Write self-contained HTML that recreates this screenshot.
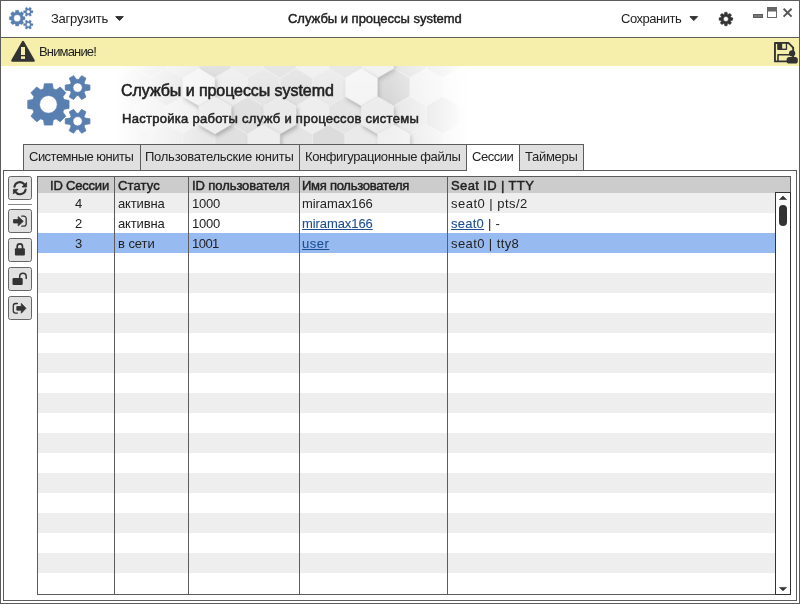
<!DOCTYPE html>
<html lang="ru">
<head>
<meta charset="utf-8">
<title>Службы и процессы systemd</title>
<style>
*{box-sizing:border-box;margin:0;padding:0}
html,body{width:800px;height:604px;overflow:hidden;background:#fff}
body{font-family:"Liberation Sans",sans-serif;font-size:13px;color:#222;position:relative}
.abs{position:absolute}
svg{position:absolute;overflow:visible}
.t{position:absolute;white-space:nowrap;line-height:16px;height:16px;color:#222;will-change:transform}
.t.m{-webkit-text-stroke:0.45px #222}
.t.m2{-webkit-text-stroke:0.5px #222}
.t.h1{font-size:16px;line-height:20px;height:20px;-webkit-text-stroke:0.55px #222}
#win{position:absolute;left:0;top:0;width:800px;height:604px;border:1px solid #5c5c5c}
#tbsep{left:1px;top:37px;width:798px;height:1px;background:#5c5c5c}
#warn{left:1px;top:38px;width:798px;height:28px;background:#f5efab}
#hex{left:100px;top:66px;width:400px;height:104px}
.tab{position:absolute;top:144px;height:27px;border:1px solid #5c5c5c;background:#e0e0e0}
.tab.act{background:#fff;border-bottom:none;z-index:3}
#pane{left:3px;top:170px;width:794px;height:431px;border:1px solid #5c5c5c;background:#fff}
.btn{position:absolute;left:8px;width:24px;height:24px;border:1px solid #666;border-radius:2.5px;background:#e1e1e1}
#table{left:37px;top:176px;width:754px;height:419px;border:1px solid #5c5c5c;background:#fff}
.row{position:absolute;left:38px;width:737px;height:20px}
.vs{position:absolute;top:177px;width:1px;height:417px;background:#5c5c5c}
#sb{left:775px;top:192px;width:16px;height:403px;border:1px solid #333;background:#fff}
#thumb{left:779px;top:205px;width:8px;height:21px;border-radius:4px;background:#333}
a{color:#1d4f91;text-decoration:underline;-webkit-text-stroke:0.1px #1d4f91}
</style>
</head>
<body>
<div id="win"></div>
<!-- toolbar -->
<div class="t" id="t_load" style="left:51.2px;top:11px;letter-spacing:-0.257px">Загрузить</div>
<div class="t m" id="t_title" style="left:288.2px;top:11px;letter-spacing:-0.014px">Службы и процессы systemd</div>
<div class="t" id="t_save" style="left:621.2px;top:11px;letter-spacing:-0.476px">Сохранить</div>
<div class="abs" id="tbsep"></div>
<div class="abs" id="warn"></div>
<div class="t" id="t_warn" style="left:38.6px;top:44px;letter-spacing:-0.845px">Внимание!</div>
<!-- header banner -->
<svg style="left:0;top:66px" width="800" height="78" viewBox="0 66 800 78">
<defs>
<filter id="hb" x="-30%" y="-30%" width="160%" height="160%"><feGaussianBlur stdDeviation="2.2"/></filter>
<linearGradient id="hm" x1="0" y1="0" x2="1" y2="0" gradientUnits="objectBoundingBox">
<stop offset="0" stop-color="#000"/><stop offset="0.04" stop-color="#000"/><stop offset="0.27" stop-color="#fff"/><stop offset="0.74" stop-color="#fff"/><stop offset="0.95" stop-color="#000"/><stop offset="1" stop-color="#000"/>
</linearGradient>
<linearGradient id="hv" x1="0" y1="0" x2="0" y2="1"><stop offset="0" stop-color="#fff" stop-opacity="0.25"/><stop offset="0.5" stop-color="#fff" stop-opacity="0"/></linearGradient>
<mask id="hk" maskUnits="userSpaceOnUse" x="100" y="66" width="390" height="78"><rect x="100" y="66" width="390" height="78" fill="url(#hm)"/></mask>
</defs>
<g mask="url(#hk)">
<rect x="100" y="66" width="390" height="78" fill="#e4e4e4"/>
<path d="M117.5 40.5 L133.6 49.8 L133.6 68.4 L117.5 77.7 L101.4 68.4 L101.4 49.8Z" fill="#e6e6e6" stroke="#f0f0f0" stroke-width="0.5"/>
<path d="M150.0 40.5 L166.1 49.8 L166.1 68.4 L150.0 77.7 L133.9 68.4 L133.9 49.8Z" fill="#e0e0e0" stroke="#f0f0f0" stroke-width="0.5"/>
<path d="M182.5 40.5 L198.6 49.8 L198.6 68.4 L182.5 77.7 L166.4 68.4 L166.4 49.8Z" fill="#e8e8e8" stroke="#f0f0f0" stroke-width="0.5"/>
<path d="M215.0 40.5 L231.1 49.8 L231.1 68.4 L215.0 77.7 L198.9 68.4 L198.9 49.8Z" fill="#d8d8d8" stroke="#f0f0f0" stroke-width="0.5"/>
<path d="M247.5 40.5 L263.6 49.8 L263.6 68.4 L247.5 77.7 L231.4 68.4 L231.4 49.8Z" fill="#e8e8e8" stroke="#f0f0f0" stroke-width="0.5"/>
<path d="M280.0 40.5 L296.1 49.8 L296.1 68.4 L280.0 77.7 L263.9 68.4 L263.9 49.8Z" fill="#dedede" stroke="#f0f0f0" stroke-width="0.5"/>
<path d="M312.5 40.5 L328.6 49.8 L328.6 68.4 L312.5 77.7 L296.4 68.4 L296.4 49.8Z" fill="#ededed" stroke="#f0f0f0" stroke-width="0.5"/>
<path d="M345.0 40.5 L361.1 49.8 L361.1 68.4 L345.0 77.7 L328.9 68.4 L328.9 49.8Z" fill="#e2e2e2" stroke="#f0f0f0" stroke-width="0.5"/>
<path d="M410.0 40.5 L426.1 49.8 L426.1 68.4 L410.0 77.7 L393.9 68.4 L393.9 49.8Z" fill="#dcdcdc" stroke="#f0f0f0" stroke-width="0.5"/>
<path d="M442.5 40.5 L458.6 49.8 L458.6 68.4 L442.5 77.7 L426.4 68.4 L426.4 49.8Z" fill="#dddddd" stroke="#f0f0f0" stroke-width="0.5"/>
<path d="M475.0 40.5 L491.1 49.8 L491.1 68.4 L475.0 77.7 L458.9 68.4 L458.9 49.8Z" fill="#ececec" stroke="#f0f0f0" stroke-width="0.5"/>
<path d="M101.2 68.6 L117.3 77.9 L117.3 96.5 L101.2 105.8 L85.2 96.5 L85.2 77.9Z" fill="#e2e2e2" stroke="#f0f0f0" stroke-width="0.5"/>
<path d="M133.8 68.6 L149.8 77.9 L149.8 96.5 L133.8 105.8 L117.7 96.5 L117.7 77.9Z" fill="#dddddd" stroke="#f0f0f0" stroke-width="0.5"/>
<path d="M166.2 68.6 L182.3 77.9 L182.3 96.5 L166.2 105.8 L150.2 96.5 L150.2 77.9Z" fill="#e2e2e2" stroke="#f0f0f0" stroke-width="0.5"/>
<path d="M231.2 68.6 L247.3 77.9 L247.3 96.5 L231.2 105.8 L215.2 96.5 L215.2 77.9Z" fill="#ececec" stroke="#f0f0f0" stroke-width="0.5"/>
<path d="M263.8 68.6 L279.8 77.9 L279.8 96.5 L263.8 105.8 L247.7 96.5 L247.7 77.9Z" fill="#e4e4e4" stroke="#f0f0f0" stroke-width="0.5"/>
<path d="M296.2 68.6 L312.3 77.9 L312.3 96.5 L296.2 105.8 L280.2 96.5 L280.2 77.9Z" fill="#e0e0e0" stroke="#f0f0f0" stroke-width="0.5"/>
<path d="M328.8 68.6 L344.8 77.9 L344.8 96.5 L328.8 105.8 L312.7 96.5 L312.7 77.9Z" fill="#e8e8e8" stroke="#f0f0f0" stroke-width="0.5"/>
<path d="M393.8 68.6 L409.8 77.9 L409.8 96.5 L393.8 105.8 L377.7 96.5 L377.7 77.9Z" fill="#d6d6d6" stroke="#f0f0f0" stroke-width="0.5"/>
<path d="M426.2 68.6 L442.3 77.9 L442.3 96.5 L426.2 105.8 L410.2 96.5 L410.2 77.9Z" fill="#eeeeee" stroke="#f0f0f0" stroke-width="0.5"/>
<path d="M458.8 68.6 L474.8 77.9 L474.8 96.5 L458.8 105.8 L442.7 96.5 L442.7 77.9Z" fill="#f4f4f4" stroke="#f0f0f0" stroke-width="0.5"/>
<path d="M491.2 68.6 L507.3 77.9 L507.3 96.5 L491.2 105.8 L475.2 96.5 L475.2 77.9Z" fill="#dfdfdf" stroke="#f0f0f0" stroke-width="0.5"/>
<path d="M117.5 96.7 L133.6 106.0 L133.6 124.6 L117.5 133.9 L101.4 124.6 L101.4 106.0Z" fill="#e3e3e3" stroke="#f0f0f0" stroke-width="0.5"/>
<path d="M150.0 96.7 L166.1 106.0 L166.1 124.6 L150.0 133.9 L133.9 124.6 L133.9 106.0Z" fill="#ececec" stroke="#f0f0f0" stroke-width="0.5"/>
<path d="M182.5 96.7 L198.6 106.0 L198.6 124.6 L182.5 133.9 L166.4 124.6 L166.4 106.0Z" fill="#f0f0f0" stroke="#f0f0f0" stroke-width="0.5"/>
<path d="M247.5 96.7 L263.6 106.0 L263.6 124.6 L247.5 133.9 L231.4 124.6 L231.4 106.0Z" fill="#e0e0e0" stroke="#f0f0f0" stroke-width="0.5"/>
<path d="M312.5 96.7 L328.6 106.0 L328.6 124.6 L312.5 133.9 L296.4 124.6 L296.4 106.0Z" fill="#eeeeee" stroke="#f0f0f0" stroke-width="0.5"/>
<path d="M345.0 96.7 L361.1 106.0 L361.1 124.6 L345.0 133.9 L328.9 124.6 L328.9 106.0Z" fill="#e4e4e4" stroke="#f0f0f0" stroke-width="0.5"/>
<path d="M410.0 96.7 L426.1 106.0 L426.1 124.6 L410.0 133.9 L393.9 124.6 L393.9 106.0Z" fill="#e6e6e6" stroke="#f0f0f0" stroke-width="0.5"/>
<path d="M442.5 96.7 L458.6 106.0 L458.6 124.6 L442.5 133.9 L426.4 124.6 L426.4 106.0Z" fill="#dddddd" stroke="#f0f0f0" stroke-width="0.5"/>
<path d="M475.0 96.7 L491.1 106.0 L491.1 124.6 L475.0 133.9 L458.9 124.6 L458.9 106.0Z" fill="#ededed" stroke="#f0f0f0" stroke-width="0.5"/>
<path d="M101.2 124.8 L117.3 134.1 L117.3 152.7 L101.2 162.0 L85.2 152.7 L85.2 134.1Z" fill="#e0e0e0" stroke="#f0f0f0" stroke-width="0.5"/>
<path d="M133.8 124.8 L149.8 134.1 L149.8 152.7 L133.8 162.0 L117.7 152.7 L117.7 134.1Z" fill="#e5e5e5" stroke="#f0f0f0" stroke-width="0.5"/>
<path d="M166.2 124.8 L182.3 134.1 L182.3 152.7 L166.2 162.0 L150.2 152.7 L150.2 134.1Z" fill="#e9e9e9" stroke="#f0f0f0" stroke-width="0.5"/>
<path d="M198.8 124.8 L214.8 134.1 L214.8 152.7 L198.8 162.0 L182.7 152.7 L182.7 134.1Z" fill="#e8e8e8" stroke="#f0f0f0" stroke-width="0.5"/>
<path d="M231.2 124.8 L247.3 134.1 L247.3 152.7 L231.2 162.0 L215.2 152.7 L215.2 134.1Z" fill="#e0e0e0" stroke="#f0f0f0" stroke-width="0.5"/>
<path d="M296.2 124.8 L312.3 134.1 L312.3 152.7 L296.2 162.0 L280.2 152.7 L280.2 134.1Z" fill="#e4e4e4" stroke="#f0f0f0" stroke-width="0.5"/>
<path d="M328.8 124.8 L344.8 134.1 L344.8 152.7 L328.8 162.0 L312.7 152.7 L312.7 134.1Z" fill="#dcdcdc" stroke="#f0f0f0" stroke-width="0.5"/>
<path d="M361.2 124.8 L377.3 134.1 L377.3 152.7 L361.2 162.0 L345.2 152.7 L345.2 134.1Z" fill="#eaeaea" stroke="#f0f0f0" stroke-width="0.5"/>
<path d="M426.2 124.8 L442.3 134.1 L442.3 152.7 L426.2 162.0 L410.2 152.7 L410.2 134.1Z" fill="#e8e8e8" stroke="#f0f0f0" stroke-width="0.5"/>
<path d="M458.8 124.8 L474.8 134.1 L474.8 152.7 L458.8 162.0 L442.7 152.7 L442.7 134.1Z" fill="#eeeeee" stroke="#f0f0f0" stroke-width="0.5"/>
<path d="M491.2 124.8 L507.3 134.1 L507.3 152.7 L491.2 162.0 L475.2 152.7 L475.2 134.1Z" fill="#eeeeee" stroke="#f0f0f0" stroke-width="0.5"/>
<path d="M117.5 152.9 L133.6 162.2 L133.6 180.8 L117.5 190.1 L101.4 180.8 L101.4 162.2Z" fill="#f0f0f0" stroke="#f0f0f0" stroke-width="0.5"/>
<path d="M150.0 152.9 L166.1 162.2 L166.1 180.8 L150.0 190.1 L133.9 180.8 L133.9 162.2Z" fill="#e2e2e2" stroke="#f0f0f0" stroke-width="0.5"/>
<path d="M182.5 152.9 L198.6 162.2 L198.6 180.8 L182.5 190.1 L166.4 180.8 L166.4 162.2Z" fill="#e7e7e7" stroke="#f0f0f0" stroke-width="0.5"/>
<path d="M215.0 152.9 L231.1 162.2 L231.1 180.8 L215.0 190.1 L198.9 180.8 L198.9 162.2Z" fill="#dfdfdf" stroke="#f0f0f0" stroke-width="0.5"/>
<path d="M247.5 152.9 L263.6 162.2 L263.6 180.8 L247.5 190.1 L231.4 180.8 L231.4 162.2Z" fill="#ededed" stroke="#f0f0f0" stroke-width="0.5"/>
<path d="M280.0 152.9 L296.1 162.2 L296.1 180.8 L280.0 190.1 L263.9 180.8 L263.9 162.2Z" fill="#dedede" stroke="#f0f0f0" stroke-width="0.5"/>
<path d="M312.5 152.9 L328.6 162.2 L328.6 180.8 L312.5 190.1 L296.4 180.8 L296.4 162.2Z" fill="#eeeeee" stroke="#f0f0f0" stroke-width="0.5"/>
<path d="M345.0 152.9 L361.1 162.2 L361.1 180.8 L345.0 190.1 L328.9 180.8 L328.9 162.2Z" fill="#dddddd" stroke="#f0f0f0" stroke-width="0.5"/>
<path d="M377.5 152.9 L393.6 162.2 L393.6 180.8 L377.5 190.1 L361.4 180.8 L361.4 162.2Z" fill="#efefef" stroke="#f0f0f0" stroke-width="0.5"/>
<path d="M410.0 152.9 L426.1 162.2 L426.1 180.8 L410.0 190.1 L393.9 180.8 L393.9 162.2Z" fill="#e2e2e2" stroke="#f0f0f0" stroke-width="0.5"/>
<path d="M442.5 152.9 L458.6 162.2 L458.6 180.8 L442.5 190.1 L426.4 180.8 L426.4 162.2Z" fill="#ebebeb" stroke="#f0f0f0" stroke-width="0.5"/>
<path d="M475.0 152.9 L491.1 162.2 L491.1 180.8 L475.0 190.1 L458.9 180.8 L458.9 162.2Z" fill="#ededed" stroke="#f0f0f0" stroke-width="0.5"/>
<path d="M379.0 42.8 L395.2 52.2 L395.2 71.0 L379.0 80.4 L362.8 71.0 L362.8 52.2Z" fill="#9a9a9a" filter="url(#hb)" opacity="0.75"/>
<path d="M377.5 40.5 L393.6 49.8 L393.6 68.4 L377.5 77.7 L361.4 68.4 L361.4 49.8Z" fill="#eeeeee" stroke="#f0f0f0" stroke-width="0.5"/>
<path d="M200.2 70.9 L216.5 80.3 L216.5 99.1 L200.2 108.5 L184.0 99.1 L184.0 80.3Z" fill="#9a9a9a" filter="url(#hb)" opacity="0.75"/>
<path d="M198.8 68.6 L214.8 77.9 L214.8 96.5 L198.8 105.8 L182.7 96.5 L182.7 77.9Z" fill="#f3f3f3" stroke="#f0f0f0" stroke-width="0.5"/>
<path d="M362.8 70.9 L379.0 80.3 L379.0 99.1 L362.8 108.5 L346.5 99.1 L346.5 80.3Z" fill="#9a9a9a" filter="url(#hb)" opacity="0.75"/>
<path d="M361.2 68.6 L377.3 77.9 L377.3 96.5 L361.2 105.8 L345.2 96.5 L345.2 77.9Z" fill="#f4f4f4" stroke="#f0f0f0" stroke-width="0.5"/>
<path d="M216.5 99.0 L232.7 108.4 L232.7 127.2 L216.5 136.6 L200.3 127.2 L200.3 108.4Z" fill="#9a9a9a" filter="url(#hb)" opacity="0.75"/>
<path d="M215.0 96.7 L231.1 106.0 L231.1 124.6 L215.0 133.9 L198.9 124.6 L198.9 106.0Z" fill="#eeeeee" stroke="#f0f0f0" stroke-width="0.5"/>
<path d="M281.5 99.0 L297.7 108.4 L297.7 127.2 L281.5 136.6 L265.3 127.2 L265.3 108.4Z" fill="#9a9a9a" filter="url(#hb)" opacity="0.75"/>
<path d="M280.0 96.7 L296.1 106.0 L296.1 124.6 L280.0 133.9 L263.9 124.6 L263.9 106.0Z" fill="#eaeaea" stroke="#f0f0f0" stroke-width="0.5"/>
<path d="M379.0 99.0 L395.2 108.4 L395.2 127.2 L379.0 136.6 L362.8 127.2 L362.8 108.4Z" fill="#9a9a9a" filter="url(#hb)" opacity="0.75"/>
<path d="M377.5 96.7 L393.6 106.0 L393.6 124.6 L377.5 133.9 L361.4 124.6 L361.4 106.0Z" fill="#ececec" stroke="#f0f0f0" stroke-width="0.5"/>
<path d="M265.2 127.1 L281.5 136.5 L281.5 155.3 L265.2 164.7 L249.0 155.3 L249.0 136.5Z" fill="#9a9a9a" filter="url(#hb)" opacity="0.75"/>
<path d="M263.8 124.8 L279.8 134.1 L279.8 152.7 L263.8 162.0 L247.7 152.7 L247.7 134.1Z" fill="#eeeeee" stroke="#f0f0f0" stroke-width="0.5"/>
<path d="M395.2 127.1 L411.5 136.5 L411.5 155.3 L395.2 164.7 L379.0 155.3 L379.0 136.5Z" fill="#9a9a9a" filter="url(#hb)" opacity="0.75"/>
<path d="M393.8 124.8 L409.8 134.1 L409.8 152.7 L393.8 162.0 L377.7 152.7 L377.7 134.1Z" fill="#f0f0f0" stroke="#f0f0f0" stroke-width="0.5"/>
<rect x="100" y="66" width="390" height="78" fill="url(#hv)"/>
</g>
</svg>
<div class="t h1" id="t_h1" style="left:121.4px;top:80.7px;letter-spacing:-0.062px">Службы и процессы systemd</div>
<div class="t m2" id="t_h2" style="left:121.6px;top:110.5px;letter-spacing:0.278px">Настройка работы служб и процессов системы</div>
<!-- tabs -->
<div class="tab" style="left:23px;width:118px"></div>
<div class="tab" style="left:140px;width:160px"></div>
<div class="tab" style="left:299px;width:168px"></div>
<div class="tab" style="left:519px;width:65px"></div>
<div class="abs" id="pane"></div>
<div class="tab act" style="left:466px;width:54px"></div>
<div class="t" id="t_tab1" style="left:28.7px;top:149px;letter-spacing:-0.513px">Системные юниты</div>
<div class="t" id="t_tab2" style="left:145.2px;top:149px;letter-spacing:-0.254px">Пользовательские юниты</div>
<div class="t" id="t_tab3" style="left:304.7px;top:149px;letter-spacing:-0.395px">Конфигурационные файлы</div>
<div class="t" id="t_tab4" style="left:471.7px;top:149px;letter-spacing:-0.471px;z-index:4">Сессии</div>
<div class="t" id="t_tab5" style="left:525.2px;top:149px;letter-spacing:-0.299px">Таймеры</div>
<!-- side buttons -->
<div class="btn" style="top:176px"></div>
<div class="abs" style="left:8px;top:204px;width:24px;height:1px;background:#888"></div>
<div class="btn" style="top:209px"></div>
<div class="btn" style="top:238px"></div>
<div class="btn" style="top:267px"></div>
<div class="btn" style="top:296px"></div>
<!-- table -->
<div class="abs" id="table"></div>
<div class="abs" style="left:38px;top:177px;width:752px;height:16px;background:#cccccc"></div>
<div id="rows">
<div class="row" style="top:193px;background:#eeeeee"></div>
<div class="row" style="top:233px;background:#97bbf1"></div>
<div class="row" style="top:273px;background:#eeeeee"></div>
<div class="row" style="top:313px;background:#eeeeee"></div>
<div class="row" style="top:353px;background:#eeeeee"></div>
<div class="row" style="top:393px;background:#eeeeee"></div>
<div class="row" style="top:433px;background:#eeeeee"></div>
<div class="row" style="top:473px;background:#eeeeee"></div>
<div class="row" style="top:513px;background:#eeeeee"></div>
<div class="row" style="top:553px;background:#eeeeee"></div>
</div>
<div class="vs" style="left:114px"></div>
<div class="vs" style="left:188px"></div>
<div class="vs" style="left:299px"></div>
<div class="vs" style="left:447px"></div>
<div class="abs" id="sb"></div>
<div class="abs" id="thumb"></div>
<div class="t m" id="th1" style="left:49.8px;top:177.5px;letter-spacing:-0.196px">ID Сессии</div>
<div class="t m" id="th2" style="left:117.5px;top:177.5px;letter-spacing:0.138px">Статус</div>
<div class="t m" id="th3" style="left:191.7px;top:177.5px;letter-spacing:-0.081px">ID пользователя</div>
<div class="t m" id="th4" style="left:302.2px;top:177.5px;letter-spacing:-0.264px">Имя пользователя</div>
<div class="t m" id="th5" style="left:450.7px;top:177.5px;letter-spacing:0.377px">Seat ID | TTY</div>
<div class="t" id="c11" style="left:74.7px;top:195.6px">4</div>
<div class="t" id="c12" style="left:117.5px;top:195.6px;letter-spacing:-0.135px">активна</div>
<div class="t" id="c13" style="left:191.7px;top:195.6px;letter-spacing:-0.207px">1000</div>
<div class="t" id="c14" style="left:302.2px;top:195.6px;letter-spacing:-0.081px">miramax166</div>
<div class="t" id="c15" style="left:450.7px;top:195.6px;letter-spacing:0.476px">seat0 | pts/2</div>
<div class="t" id="c21" style="left:74.7px;top:215.6px">2</div>
<div class="t" id="c22" style="left:117.5px;top:215.6px;letter-spacing:-0.135px">активна</div>
<div class="t" id="c23" style="left:191.7px;top:215.6px;letter-spacing:-0.207px">1000</div>
<div class="t" id="c24" style="left:302.2px;top:215.6px;letter-spacing:-0.081px"><a>miramax166</a></div>
<div class="t" id="c25" style="left:450.7px;top:215.6px;letter-spacing:0.256px"><a>seat0</a> | -</div>
<div class="t" id="c31" style="left:74.7px;top:235.6px">3</div>
<div class="t" id="c32" style="left:117.5px;top:235.6px;letter-spacing:-0.049px">в сети</div>
<div class="t" id="c33" style="left:191.7px;top:235.6px;letter-spacing:-0.541px">1001</div>
<div class="t" id="c34" style="left:302.2px;top:235.6px;letter-spacing:0.501px"><a>user</a></div>
<div class="t" id="c35" style="left:450.7px;top:235.6px;letter-spacing:0.404px">seat0 | tty8</div>
<!-- icons -->
<svg style="left:27px;top:75px" width="64.0" height="59.0" viewBox="0 0 64 59"><path fill="#587fb0" fill-rule="evenodd" stroke="#587fb0" stroke-width="0.8" stroke-linejoin="round" d="M26.20 44.98 L25.40 50.02 L17.40 50.02 L16.60 44.98 L13.78 43.81 L9.65 46.81 L3.99 41.15 L6.99 37.02 L5.82 34.20 L0.78 33.40 L0.78 25.40 L5.82 24.60 L6.99 21.78 L3.99 17.65 L9.65 11.99 L13.78 14.99 L16.60 13.82 L17.40 8.78 L25.40 8.78 L26.20 13.82 L29.02 14.99 L33.15 11.99 L38.81 17.65 L35.81 21.78 L36.98 24.60 L42.02 25.40 L42.02 33.40 L36.98 34.20 L35.81 37.02 L38.81 41.15 L33.15 46.81 L29.02 43.81Z M30.30 29.40 A8.90 8.90 0 1 0 12.50 29.40 A8.90 8.90 0 1 0 30.30 29.40Z M58.04 9.40 L62.95 10.10 L62.95 15.10 L58.04 15.80 L57.09 17.44 L58.94 22.04 L54.61 24.54 L51.55 20.64 L49.65 20.64 L46.59 24.54 L42.26 22.04 L44.11 17.44 L43.16 15.80 L38.25 15.10 L38.25 10.10 L43.16 9.40 L44.11 7.76 L42.26 3.16 L46.59 0.66 L49.65 4.56 L51.55 4.56 L54.61 0.66 L58.94 3.16 L57.09 7.76Z M55.30 12.60 A4.70 4.70 0 1 0 45.90 12.60 A4.70 4.70 0 1 0 55.30 12.60Z M58.04 43.10 L62.95 43.80 L62.95 48.80 L58.04 49.50 L57.09 51.14 L58.94 55.74 L54.61 58.24 L51.55 54.34 L49.65 54.34 L46.59 58.24 L42.26 55.74 L44.11 51.14 L43.16 49.50 L38.25 48.80 L38.25 43.80 L43.16 43.10 L44.11 41.46 L42.26 36.86 L46.59 34.36 L49.65 38.26 L51.55 38.26 L54.61 34.36 L58.94 36.86 L57.09 41.46Z M55.30 46.30 A4.70 4.70 0 1 0 45.90 46.30 A4.70 4.70 0 1 0 55.30 46.30Z"/></svg>
<svg style="left:9.2px;top:7.1px" width="24.4" height="22.5" viewBox="0 0 64 59"><path fill="#587fb0" fill-rule="evenodd" stroke="#587fb0" stroke-width="0.8" stroke-linejoin="round" d="M26.20 44.98 L25.40 50.02 L17.40 50.02 L16.60 44.98 L13.78 43.81 L9.65 46.81 L3.99 41.15 L6.99 37.02 L5.82 34.20 L0.78 33.40 L0.78 25.40 L5.82 24.60 L6.99 21.78 L3.99 17.65 L9.65 11.99 L13.78 14.99 L16.60 13.82 L17.40 8.78 L25.40 8.78 L26.20 13.82 L29.02 14.99 L33.15 11.99 L38.81 17.65 L35.81 21.78 L36.98 24.60 L42.02 25.40 L42.02 33.40 L36.98 34.20 L35.81 37.02 L38.81 41.15 L33.15 46.81 L29.02 43.81Z M30.30 29.40 A8.90 8.90 0 1 0 12.50 29.40 A8.90 8.90 0 1 0 30.30 29.40Z M58.04 9.40 L62.95 10.10 L62.95 15.10 L58.04 15.80 L57.09 17.44 L58.94 22.04 L54.61 24.54 L51.55 20.64 L49.65 20.64 L46.59 24.54 L42.26 22.04 L44.11 17.44 L43.16 15.80 L38.25 15.10 L38.25 10.10 L43.16 9.40 L44.11 7.76 L42.26 3.16 L46.59 0.66 L49.65 4.56 L51.55 4.56 L54.61 0.66 L58.94 3.16 L57.09 7.76Z M55.30 12.60 A4.70 4.70 0 1 0 45.90 12.60 A4.70 4.70 0 1 0 55.30 12.60Z M58.04 43.10 L62.95 43.80 L62.95 48.80 L58.04 49.50 L57.09 51.14 L58.94 55.74 L54.61 58.24 L51.55 54.34 L49.65 54.34 L46.59 58.24 L42.26 55.74 L44.11 51.14 L43.16 49.50 L38.25 48.80 L38.25 43.80 L43.16 43.10 L44.11 41.46 L42.26 36.86 L46.59 34.36 L49.65 38.26 L51.55 38.26 L54.61 34.36 L58.94 36.86 L57.09 41.46Z M55.30 46.30 A4.70 4.70 0 1 0 45.90 46.30 A4.70 4.70 0 1 0 55.30 46.30Z"/></svg>
<svg style="left:0;top:0;z-index:5" width="800" height="604" viewBox="0 0 800 604">
<path fill="#333333" stroke="#333333" stroke-width="1" stroke-linejoin="round" d="M115.7 16.6 L123.3 16.6 L119.5 20.6Z"/>
<path fill="#333333" stroke="#333333" stroke-width="1" stroke-linejoin="round" d="M690.0 16.6 L697.6 16.6 L693.8 20.6Z"/>
<path fill="#333333" stroke="#333333" stroke-width="2.4" stroke-linejoin="round" d="M23 42 L33.6 60.6 L12.4 60.6Z"/>
<rect x="21" y="47" width="4" height="8" fill="#f5efab"/><rect x="21" y="56.3" width="4" height="2.6" fill="#f5efab"/>
<path fill="#333333" fill-rule="evenodd" stroke="#333333" stroke-width="0.5" stroke-linejoin="round" d="M727.55 23.61 L727.05 25.80 L724.75 25.80 L724.25 23.61 L723.80 23.43 L721.90 24.62 L720.28 23.00 L721.47 21.10 L721.29 20.65 L719.10 20.15 L719.10 17.85 L721.29 17.35 L721.47 16.90 L720.28 15.00 L721.90 13.38 L723.80 14.57 L724.25 14.39 L724.75 12.20 L727.05 12.20 L727.55 14.39 L728.00 14.57 L729.90 13.38 L731.52 15.00 L730.33 16.90 L730.51 17.35 L732.70 17.85 L732.70 20.15 L730.51 20.65 L730.33 21.10 L731.52 23.00 L729.90 24.62 L728.00 23.43Z M728.40 19.00 A2.50 2.50 0 1 0 723.40 19.00 A2.50 2.50 0 1 0 728.40 19.00Z"/>
<rect x="753.5" y="14.5" width="9" height="3" fill="#777" stroke="#5e5e5e" stroke-width="1"/>
<rect x="767.5" y="7.5" width="9" height="10" fill="#fff" stroke="#6a6a6a" stroke-width="1"/><rect x="767" y="7" width="10" height="4.5" fill="#666"/>
<path d="M783.6 8.8 L791.6 16.6 M791.6 8.8 L783.6 16.6" stroke="#555" stroke-width="1.9" fill="none"/>
<path fill="none" stroke="#333333" stroke-width="1.9" stroke-linejoin="round" d="M774.95 42.95 L788.4 42.95 L793.15 47.7 L793.15 61.4 L774.95 61.4 Z"/>
<path fill="#333333" d="M777.2 42.5 H787.1 V49.3 Q787.1 49.9 786.5 49.9 H777.8 Q777.2 49.9 777.2 49.3Z"/><rect x="782.2" y="43.8" width="3.6" height="4.8" fill="#f5efab"/>
<path fill="none" stroke="#333333" stroke-width="1.6" stroke-linejoin="round" d="M778 61.4 V54.7 H790 "/>
<circle cx="792.1" cy="53.3" r="3.15" fill="#333333"/><rect x="786.6" y="57.1" width="11.2" height="6.5" rx="2.6" fill="#333333"/>
<g fill="none" stroke="#333333" stroke-width="2.1" stroke-linecap="round"><path d="M14.4 186.8 A5.6 5.6 0 0 1 24.4 184.4"/><path d="M25.6 189.6 A5.6 5.6 0 0 1 15.6 192"/></g>
<path fill="#333333" stroke="#333333" stroke-width="0.8" stroke-linejoin="round" d="M26.6 182.4 V187 H22Z M13.4 194 V189.4 H18Z"/>
<path fill="#333333" stroke="#333333" stroke-width="0.8" stroke-linejoin="round" d="M13.5 219.6 H18.2 V216.6 L23.3 221.3 L18.2 226 V223 H13.5Z"/>
<path fill="none" stroke="#333333" stroke-width="1.3" stroke-linecap="round" d="M21.8 216.2 H23.8 A2.4 2.4 0 0 1 26.2 218.6 V223.8 A2.4 2.4 0 0 1 23.8 226.2 H21.8"/>
<rect x="14.9" y="248.2" width="10" height="7.4" rx="1" fill="#333333"/>
<path fill="none" stroke="#333333" stroke-width="1.7" d="M17.2 249 V246.6 A2.65 2.65 0 0 1 22.5 246.6 V249"/>
<rect x="12.5" y="277.9" width="10.2" height="7" rx="1" fill="#333333"/>
<path fill="none" stroke="#333333" stroke-width="1.5" stroke-linecap="round" d="M19.7 278.5 V276.4 A3.25 3.25 0 0 1 26.2 276.4 V278.6"/>
<path fill="none" stroke="#333333" stroke-width="1.3" stroke-linecap="round" d="M17.4 303.5 H15.7 A2.4 2.4 0 0 0 13.3 305.9 V310.7 A2.4 2.4 0 0 0 15.7 313.1 H17.4"/>
<path fill="#333333" stroke="#333333" stroke-width="0.8" stroke-linejoin="round" d="M16.8 306.5 H21.3 V303.4 L26 308.3 L21.3 313.2 V310.2 H16.8Z"/>
<path fill="#333333" stroke="#333333" stroke-width="0.6" stroke-linejoin="round" d="M779.4 199.5 L786.6 199.5 L783 196.1Z M779.4 587.4 L786.6 587.4 L783 590.8Z"/>
</svg>
</body>
</html>
